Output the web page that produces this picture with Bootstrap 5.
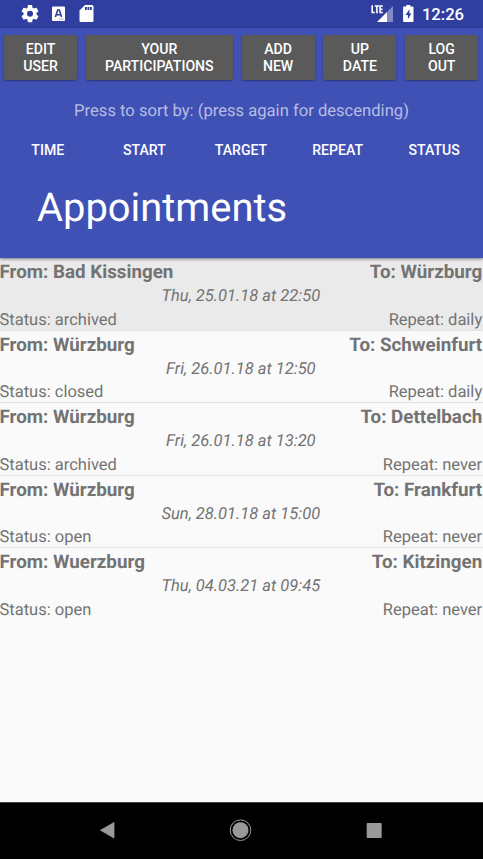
<!DOCTYPE html>
<html lang="en">
<head>
<meta charset="utf-8">
<meta name="viewport" content="width=device-width, initial-scale=1">
<title>Appointments</title>
<link href="https://cdn.jsdelivr.net/npm/bootstrap@5.3.0/dist/css/bootstrap.min.css" rel="stylesheet">
<style>
  body { font-family: Roboto, "Noto Sans", sans-serif; background: #fafafa; color: #737373; height: 859px; overflow: hidden; line-height: 1.172; font-size: 16.5px; text-rendering: geometricPrecision; }
  .status-bar { height: 28px; background: #303f9f; padding: 0 19px 0 20px; }
  .clock { font-size: 16.6px; font-weight: 500; line-height: 28px; padding-top: 1px; }
  .app-header { height: 230px; background: #4051b5; box-shadow: 0 1px 3px rgba(0,0,0,.5); position: relative; z-index: 1; }
  .actions { padding: 6.5px 4.5px 0 4px; gap: 8.8px; }
  .actions .btn { width: 73px; height: 45.5px; padding: 1px 0 0; border: 0; border-radius: 2px; background: #5a5a5a; color: #fff; font-size: 14.1px; font-weight: 500; line-height: 17px; box-shadow: 0 1px 2px rgba(0,0,0,.35); }
  .actions .btn-wide { width: 147px; }
  .hint { color: #b7bde2; margin-top: 22px; line-height: 20px; font-size: 16.6px; }
  .sorts { margin-top: 18px; }
  .sorts .btn { padding: 0 1px 0 0; border: 0; border-radius: 0; color: #fff; font-size: 14.1px; font-weight: 500; line-height: 20px; }
  .page-title { font-size: 39.9px; font-weight: 400; line-height: 48px; margin: 24px 0 0 37px; }
  .appointment { height: 72.5px; padding: 2px .8px 0 0; border: 0; border-radius: 0; border-bottom: 2px solid #e2e2e2; background: transparent; color: inherit; }
  .appointment.archived-first { background: #eaeaea; }
  .appointment:last-child { border-bottom: 0; }
  .appointment > div { margin-left: -.5px; }
  .place { font-size: 18.8px; font-weight: 700; line-height: 24px; }
  .when { line-height: 23px; padding-top: 1px; }
  .detail { line-height: 23px; padding-top: .5px; }
  .nav-keys { height: 57px; background: #000; border-top: 1px solid #444; padding-right: 1px; }
</style>
<script src="https://cdn.jsdelivr.net/npm/bootstrap@5.3.0/dist/js/bootstrap.bundle.min.js"></script>
</head>
<body class="d-flex flex-column">
<div class="status-bar d-flex justify-content-between text-white">
  <svg width="80" height="28" viewBox="0 0 80 28" fill="#fff" aria-label="Notifications">
    <path transform="translate(-.3 3.4) scale(.86)" d="M19.43 12.98c.04-.32.07-.64.07-.98s-.03-.66-.07-.98l2.11-1.65c.19-.15.24-.42.12-.64l-2-3.46c-.12-.22-.39-.3-.61-.22l-2.49 1c-.52-.4-1.08-.73-1.69-.98l-.38-2.65C14.46 2.18 14.25 2 14 2h-4c-.25 0-.46.18-.49.42l-.38 2.65c-.61.25-1.17.59-1.69.98l-2.49-1c-.23-.09-.49 0-.61.22l-2 3.46c-.13.22-.07.49.12.64l2.11 1.65c-.04.32-.07.65-.07.98s.03.66.07.98l-2.11 1.65c-.19.15-.24.42-.12.64l2 3.46c.12.22.39.3.61.22l2.49-1c.52.4 1.08.73 1.69.98l.38 2.65c.03.24.24.42.49.42h4c.25 0 .46-.18.49-.42l.38-2.65c.61-.25 1.17-.59 1.69-.98l2.49 1c.23.09.49 0 .61-.22l2-3.46c.12-.22.07-.49-.12-.64zM12 15.5a3.5 3.5 0 1 1 0-7 3.5 3.5 0 0 1 0 7z"/>
    <rect x="32" y="6.5" width="13" height="14.5" rx="1"/>
    <path d="M35.4 17 37.7 10h1.6L41.6 17M36.4 14.7h4.2" fill="none" stroke="#303f9f" stroke-width="1.6"/>
    <path d="M39 19h5" stroke="#303f9f" stroke-width=".7" stroke-dasharray="1 .7"/>
    <path d="M65 5h7a1.5 1.5 0 0 1 1.5 1.5v14A1.5 1.5 0 0 1 72 22H61a1.5 1.5 0 0 1-1.5-1.5V10.5z"/>
    <path d="M65 7h1.8v3H65zM67.5 7h1.8v3h-1.8zM70 7h1.8v3H70z" fill="#303f9f"/>
  </svg>
  <div class="d-flex">
    <svg width="51" height="28" viewBox="0 0 51 28" fill="#fff" aria-label="LTE signal, battery charging">
      <path d="M22 6v16h-6V12z" opacity=".4"/>
      <path d="M16 12v10H6z"/>
      <path d="M1.2 5.2v7.3h2.7M3.7 6h4.3M5.9 6v7.2M11.8 6H9.1v6.5h2.7M9.1 9.2h2.4" fill="none" stroke="#fff" stroke-width="1.6"/>
      <path d="M35.3 5h4v1.6h2.2c.6 0 1 .4 1 1v13.3c0 .6-.4 1-1 1h-8.4c-.6 0-1-.4-1-1V7.6c0-.6.4-1 1-1h2.2z"/>
      <path d="m38.5 9.3-4 5.7h2.4v4.3l3.5-5.7h-2z" fill="#303f9f"/>
    </svg>
    <div class="clock pt-1 lh-base">12:26</div>
  </div>
</div>

<header class="app-header text-white">
  <div class="actions d-flex">
    <button class="btn">EDIT<br>USER</button>
    <button class="btn btn-wide">YOUR<br>PARTICIPATIONS</button>
    <button class="btn">ADD<br>NEW</button>
    <button class="btn">UP<br>DATE</button>
    <button class="btn">LOG<br>OUT</button>
  </div>
  <div class="hint text-center">Press to sort by: (press again for descending)</div>
  <div class="sorts row row-cols-5 g-0">
    <button class="btn col">TIME</button>
    <button class="btn col">START</button>
    <button class="btn col">TARGET</button>
    <button class="btn col">REPEAT</button>
    <button class="btn col">STATUS</button>
  </div>
  <h1 class="page-title">Appointments</h1>
</header>

<main class="list-group list-group-flush flex-grow-1">
  <div class="list-group-item appointment archived-first">
    <div class="place d-flex justify-content-between"><span>From: Bad Kissingen</span><span>To: Würzburg</span></div>
    <div class="when text-center fst-italic">Thu, 25.01.18 at 22:50</div>
    <div class="detail d-flex justify-content-between"><span>Status: archived</span><span>Repeat: daily</span></div>
  </div>
  <div class="list-group-item appointment">
    <div class="place d-flex justify-content-between"><span>From: Würzburg</span><span>To: Schweinfurt</span></div>
    <div class="when text-center fst-italic">Fri, 26.01.18 at 12:50</div>
    <div class="detail d-flex justify-content-between"><span>Status: closed</span><span>Repeat: daily</span></div>
  </div>
  <div class="list-group-item appointment">
    <div class="place d-flex justify-content-between"><span>From: Würzburg</span><span>To: Dettelbach</span></div>
    <div class="when text-center fst-italic">Fri, 26.01.18 at 13:20</div>
    <div class="detail d-flex justify-content-between"><span>Status: archived</span><span>Repeat: never</span></div>
  </div>
  <div class="list-group-item appointment">
    <div class="place d-flex justify-content-between"><span>From: Würzburg</span><span>To: Frankfurt</span></div>
    <div class="when text-center fst-italic">Sun, 28.01.18 at 15:00</div>
    <div class="detail d-flex justify-content-between"><span>Status: open</span><span>Repeat: never</span></div>
  </div>
  <div class="list-group-item appointment">
    <div class="place d-flex justify-content-between"><span>From: Wuerzburg</span><span>To: Kitzingen</span></div>
    <div class="when text-center fst-italic">Thu, 04.03.21 at 09:45</div>
    <div class="detail d-flex justify-content-between"><span>Status: open</span><span>Repeat: never</span></div>
  </div>
</main>

<nav class="nav-keys d-flex justify-content-center">
  <svg width="320" height="56" viewBox="0 0 320 56" fill="#999" aria-label="Back, home, overview">
    <path d="M33 19.5V35L19.5 27.2z" stroke="#999" stroke-width=".8" stroke-linejoin="round"/>
    <circle cx="159.5" cy="27.2" r="8"/>
    <circle cx="159.5" cy="27.2" r="10.3" fill="none" stroke="#999" stroke-width="1"/>
    <rect x="285.7" y="20" width="15" height="15" rx=".8"/>
  </svg>
</nav>
</body>
</html>
